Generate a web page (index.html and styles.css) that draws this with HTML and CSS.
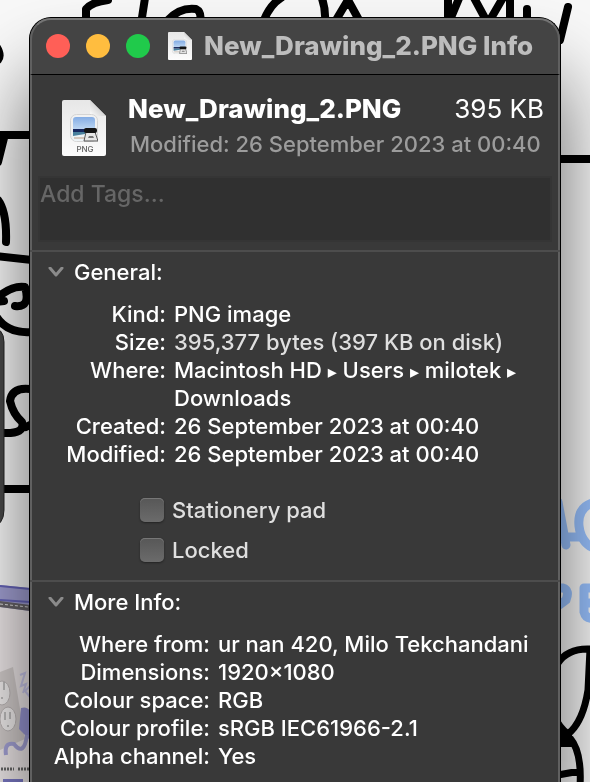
FILE: index.html
```html
<!DOCTYPE html>
<html lang="en-GB">
<head>
<meta charset="utf-8">
<meta name="viewport" content="width=device-width, initial-scale=1">
<title>New_Drawing_2.PNG Info</title>
<link rel="stylesheet" href="styles.css">
</head>
<body>
<svg class="backdrop" viewBox="0 0 590 782" preserveAspectRatio="xMidYMin slice" aria-hidden="true">
  <g fill="none" stroke="#000" stroke-width="8" stroke-linecap="round" stroke-linejoin="round">
    <path d="M108 0Q92 2 86 9V24M145 -2L141 24M168 20Q180 7 196 9Q202 12 200 22M264 20Q270 5 281 -2"/>
    <path d="M321 -4Q326 8 325 22M336 20L348 0L359 20M448 -4V24M450 20L460 -4M473 -4L486 20M490 20L504 -4M510 -4V22M527 9V24M568 7L560 40"/>
    <path d="M-4 46Q2 55 -2 60M0 135H32M4 138L-2 162M-2 200Q7 212 6 242M-4 256L32 260M-3 298Q12 285 25 287Q31 308 15 306M-3 302L4 301M-4 316Q7 334 32 332M30 389Q12 387 10 401Q13 414 22 422Q26 434 3 433M26 427L32 424M0 489H32M560 159H594"/>
  </g>
  <g fill="none" stroke="#99c2ff" stroke-width="9" stroke-linecap="round">
    <path d="M558 502L566 545M562 537H578M596 502Q577 506 579 526Q581 544 596 549M558 588H563Q570 590 566 600L558 606M584 588V612Q586 620 596 618M584 588H596M584 603H594"/>
  </g>
  <g fill="none" stroke="#000" stroke-width="7">
    <path d="M558 663Q568 648 590 649L588 690Q583 722 568 734Q558 726 556 718M570 738Q582 752 580 786M562 732V742M558 775L580 771"/>
  </g>
  <path d="M560 733H572V747H560Z"/>
  <g>
    <path fill="#a19fd2" d="M0 585L30 588V620H0Z"/>
    <path fill="none" stroke="#6563b8" stroke-width="2" d="M0 586L30 589M0 600L30 602"/>
    <path fill="#eee8e9" d="M0 607L30 611V782H0Z"/>
    <path fill="#666267" d="M0 601L30 605V611L0 607Z"/>
    <path stroke="#ddd" stroke-width="1" stroke-dasharray="3 2" d="M0 604L28 607"/>
    <path fill="#d2cccb" d="M0 672L13 667L25 739L0 750Z"/>
    <g fill="#f0eded" stroke="#bbb5b5"><ellipse cx="2" cy="693" rx="8" ry="12"/><ellipse cx="8" cy="719" rx="8" ry="12"/></g>
    <path fill="none" stroke="#888" d="M4 682V690M2 697V699M5 712V720M10 712V719M8 725V727"/>
    <path fill="none" stroke="#c9c7ea" stroke-width="2" d="M20 675L25 673L21 686L26 684L23 693M30 686L25 691L30 697"/>
    <path fill="#9896d4" d="M21 708Q27 706 30 711V740L19 729Z"/>
    <path fill="none" stroke="#a4a2d6" stroke-width="4" d="M6 755Q4 742 14 744Q24 757 27 735"/>
    <path stroke="#666" stroke-width="3" stroke-dasharray="2 1" d="M1 769H14M18 769H30"/>
    <path fill="#7a78c4" d="M3 779H23V782H3Z"/>
  </g>
  <path fill="#474747" stroke="#252525" d="M-10 326Q4 328 4 342V510Q4 525 -10 529Z"/>
</svg>

<svg class="symbols" aria-hidden="true">
  <defs>
    <linearGradient id="paper" x2="0" y2="1"><stop stop-color="#e7e7e7"/><stop offset="1" stop-color="#fcfcfc"/></linearGradient>
    <linearGradient id="sky" x2="0" y2="1"><stop stop-color="#84ace4"/><stop offset="1" stop-color="#bcd6f3"/></linearGradient>
    <linearGradient id="fold" x1="0" y1="1" x2="1" y2="0"><stop stop-color="#fff"/><stop offset=".5" stop-color="#d6d6d6"/></linearGradient>
    <symbol id="picture" viewBox="0 0 28 28">
      <rect x=".5" y=".5" width="27" height="27" rx="6" fill="#f1f1f1" stroke="#d4d4d4"/>
      <rect x="3" y="3" width="22" height="24" rx="3" fill="#edf3f6"/>
      <path fill="url(#sky)" d="M6 3H22Q25 3 25 6V15H3V6Q3 3 6 3Z"/>
      <path fill="#17275d" d="M3 15H25V18H3Z"/>
      <path fill="#4a819d" d="M3 18H15V20L3 22Z"/>
      <path fill="none" stroke="#bd9c85" d="M4 24H14"/>
      <path fill="#e7e7e7" stroke="#555" d="M16 18H25L28 27H14Z"/>
      <rect x="14" y="14" width="13" height="5" rx="2" fill="#151515"/>
      <path fill="#777" d="M19 22H23L24 24H18Z"/>
    </symbol>
  </defs>
</svg>

<main class="window">
  <header class="titlebar">
    <div class="lights">
      <button class="light close" type="button" aria-label="Close"></button>
      <button class="light minimise" type="button" aria-label="Minimise"></button>
      <button class="light zoom" type="button" aria-label="Zoom"></button>
    </div>
    <svg class="proxy-icon" viewBox="0 0 24 28" aria-hidden="true">
      <path fill="url(#paper)" d="M1 0H16L24 8V27Q24 28 23 28H1Q0 28 0 27V1Q0 0 1 0Z"/>
      <path fill="url(#fold)" d="M16 0V7Q16 8 17 8H24Z"/>
      <use href="#picture" x="4" y="7" width="15" height="15"/>
    </svg>
    <h1 class="title">New_Drawing_2.PNG Info</h1>
  </header>

  <section class="summary">
    <svg class="file-icon" viewBox="0 0 44 56" aria-hidden="true">
      <path fill="url(#paper)" d="M2 0H28L44 16V54Q44 56 42 56H2Q0 56 0 54V2Q0 0 2 0Z"/>
      <path fill="url(#fold)" d="M28 0V13Q28 16 31 16H44Z"/>
      <use href="#picture" x="8" y="14" width="28" height="28"/>
      <text class="file-type" x="23" y="52" text-anchor="middle">PNG</text>
    </svg>
    <div class="summary-text">
      <div class="name-row"><strong>New_Drawing_2.PNG</strong><span>395 KB</span></div>
      <p class="modified">Modified: 26 September 2023 at 00:40</p>
    </div>
  </section>

  <div class="tags"><textarea class="tags-input" aria-label="Tags" placeholder="Add Tags..."></textarea></div>

  <section class="panel">
    <h2><button class="disclosure" type="button" aria-expanded="true"><svg class="chevron" viewBox="0 0 16 10" aria-hidden="true"><path d="M2 1L8 8L14 1"/></svg>General:</button></h2>
    <dl class="details general">
      <dt>Kind:</dt><dd>PNG image</dd>
      <dt>Size:</dt><dd class="soft">395,377 bytes (397 KB on disk)</dd>
      <dt>Where:</dt><dd>Macintosh HD <span class="arrow">▸</span> Users <span class="arrow">▸</span> milotek <span class="arrow">▸</span> Downloads</dd>
      <dt>Created:</dt><dd>26 September 2023 at 00:40</dd>
      <dt>Modified:</dt><dd>26 September 2023 at 00:40</dd>
    </dl>
    <div class="options">
      <label class="option"><input class="check" type="checkbox">Stationery pad</label>
      <label class="option"><input class="check" type="checkbox">Locked</label>
    </div>
  </section>

  <section class="panel">
    <h2><button class="disclosure" type="button" aria-expanded="true"><svg class="chevron" viewBox="0 0 16 10" aria-hidden="true"><path d="M2 1L8 8L14 1"/></svg>More Info:</button></h2>
    <dl class="details more">
      <dt>Where from:</dt><dd>ur nan 420, Milo Tekchandani</dd>
      <dt>Dimensions:</dt><dd>1920×1080</dd>
      <dt>Colour space:</dt><dd>RGB</dd>
      <dt>Colour profile:</dt><dd>sRGB IEC61966-2.1</dd>
      <dt>Alpha channel:</dt><dd>Yes</dd>
    </dl>
  </section>
</main>
</body>
</html>
```
FILE: styles.css
```css
* { box-sizing: border-box; }

body {
  margin: 0;
  min-height: 100vh;
  display: flex;
  padding: 17px 29px 0;
  overflow: hidden;
  background: #f8f8f8;
  color: #fff;
  font: 500 22px/28px Inter, "Liberation Sans", sans-serif;
}

h1, h2, p, dl, dd { margin: 0; font: inherit; }
button { border: 0; padding: 0; background: none; color: inherit; font: inherit; }

.backdrop { position: fixed; inset: 0; width: 100%; height: 100%; }
.symbols { position: absolute; width: 0; height: 0; }

.window {
  position: relative;
  flex: 1;
  min-width: 0;
  border: 1px solid #000;
  border-bottom: 0;
  border-radius: 22px 22px 0 0;
  background: #393939;
  box-shadow: inset 2px 0 #606060, inset -2px 0 #606060, 0 60px 80px rgba(0, 0, 0, .6);
}

.titlebar {
  display: flex;
  align-items: center;
  height: 57px;
  padding: 0 14px 2px;
  border: 2px solid #606060;
  border-top-color: #757575;
  border-bottom: 1px solid #000;
  border-radius: 21px 21px 0 0;
  background: #444;
}
.lights { display: flex; gap: 16px; margin-right: 18px; }
.light { width: 24px; height: 24px; border-radius: 50%; }
.close { background: #ff5f57; }
.minimise { background: #ffbd3f; }
.zoom { background: #20ca4b; }
.proxy-icon { flex: none; width: 24px; height: 28px; margin-right: 12px; }
.title { color: #bdbdbd; font-size: 26px; font-weight: 800; white-space: nowrap; }

.summary { display: flex; gap: 22px; padding: 16px 16px 15px 32px; }
.file-icon { flex: none; width: 44px; height: 56px; margin-top: 9px; }
.file-type { fill: #606060; font-size: 8px; font-weight: 500; }
.summary-text { flex: 1; min-width: 0; }
.name-row { display: flex; justify-content: space-between; font-size: 26px; line-height: 36px; white-space: nowrap; }
.name-row strong { font-weight: 800; }
.name-row span { font-weight: 400; }
.modified { padding-left: 2px; color: #9c9c9c; line-height: 34px; white-space: nowrap; }

.tags { padding: 0 8px 8px; }
.tags-input {
  display: block;
  width: 100%;
  height: 66px;
  padding: 0;
  border: 2px solid #353535;
  outline: 0;
  resize: none;
  background: #303030;
  color: #fff;
  font: 500 23px/32px Inter, sans-serif;
}
.tags-input::placeholder { color: #666; opacity: 1; }

.panel { border-top: 2px solid #4d4d4d; padding: 6px 18px 10px; }
.disclosure { display: flex; align-items: center; gap: 10px; }
.chevron { width: 16px; height: 10px; fill: none; stroke: #8b8b8b; stroke-width: 3; stroke-linecap: round; stroke-linejoin: round; }

.details { display: grid; column-gap: 8px; padding-top: 14px; }
.general { grid-template-columns: 118px 1fr; }
.more { grid-template-columns: 162px 1fr; }
dt { justify-self: end; white-space: nowrap; }
.soft, .option { color: #dfdfdf; }
.arrow { font: 18px/20px "DejaVu Sans", sans-serif; }

.options { padding: 22px 0 0 92px; }
.option { display: flex; align-items: center; gap: 8px; height: 40px; }
.check {
  appearance: none;
  width: 24px;
  height: 24px;
  margin: 0;
  border-radius: 5px;
  background: linear-gradient(#575757, #6b6b6b);
  box-shadow: inset 0 1px #777, 0 1px 2px #222;
}
```
